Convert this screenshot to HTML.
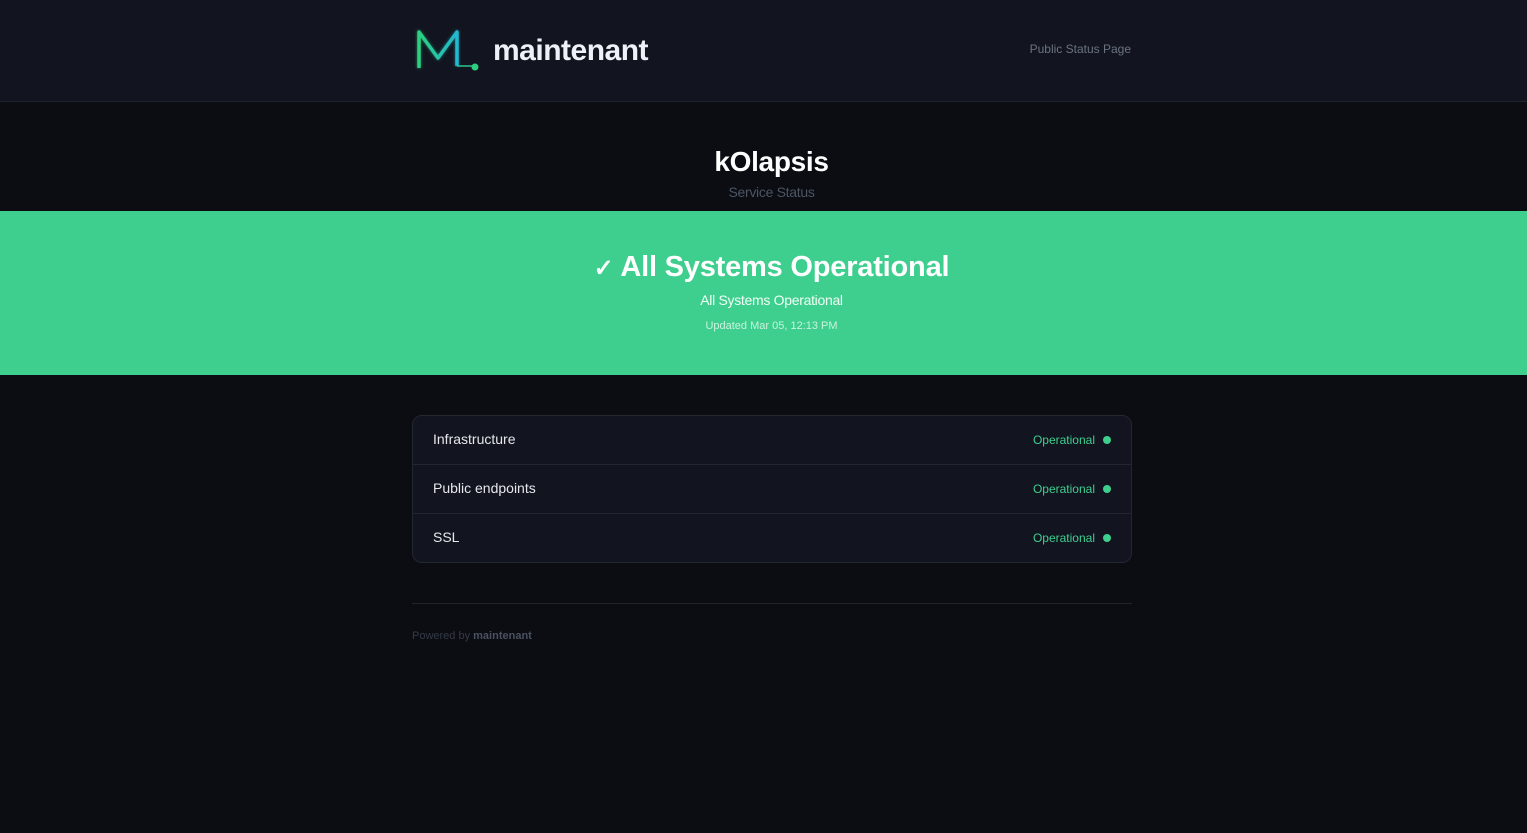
<!DOCTYPE html>
<html><head><meta charset="utf-8"><style>
*{margin:0;padding:0;box-sizing:border-box}
body{width:1527px;height:833px;background:#0b0d12;font-family:"Liberation Sans",sans-serif;position:relative;overflow:hidden}
.hdr{position:absolute;left:0;top:0;width:1527px;height:102px;background:#121520;border-bottom:1px solid #1f232c}
.brand{position:absolute;left:493px;top:34px;color:#eef2f8;font-size:30px;font-weight:bold;letter-spacing:-0.5px}
.pub{position:absolute;right:396px;top:42px;color:#6b7280;font-size:12px}
.c{left:8px;width:1527px;text-align:center}
.title{position:absolute;top:146px;color:#fff;font-size:28px;font-weight:bold;letter-spacing:-0.3px}
.sub{position:absolute;top:184px;color:#4b5563;font-size:14px;letter-spacing:-0.3px}
.band{position:absolute;top:211px;left:0;width:1527px;height:164px;background:#3ecf8e}
.big{position:absolute;top:40px;color:#fff;font-size:29px;font-weight:bold;letter-spacing:-0.2px}
.b2{position:absolute;top:81px;color:#f0fff6;font-size:14px;letter-spacing:-0.3px}
.b3{position:absolute;top:109px;color:#c9f2de;font-size:11px}
.card{position:absolute;left:412px;top:415px;width:720px;height:148px;border:1px solid #232730;border-radius:10px;background:#121520;overflow:hidden}
.row{height:49px;border-bottom:1px solid #232730;position:relative}
.row:last-child{border-bottom:none}
.row .n{position:absolute;left:20px;top:15px;color:#e5e7eb;font-size:14px}
.row .s{position:absolute;right:36px;top:17px;color:#3ecf8e;font-size:12px}
.row .d{position:absolute;right:20px;top:20px;width:8px;height:8px;border-radius:50%;background:#3ecf8e}
.hr{position:absolute;left:412px;top:603px;width:720px;height:1px;background:#1f232c}
.foot{position:absolute;left:412px;top:630px;color:#343a46;font-size:11px}
.foot b{color:#4a5160}
</style></head><body>
<div class="hdr">
<svg style="position:absolute;left:414px;top:28px" width="70" height="46" viewBox="0 0 70 46">
<defs><linearGradient id="g" x1="0" x2="1"><stop offset="0" stop-color="#2ccf7e"/><stop offset="1" stop-color="#22b8d0"/></linearGradient>
<filter id="f"><feGaussianBlur stdDeviation="1.5"/></filter></defs>
<g fill="none" stroke="url(#g)" stroke-width="3.5" stroke-linejoin="round">
<path d="M5 40 V4 L24 30 L43 4 V38" filter="url(#f)" opacity=".6"/>
<path d="M5 40 V4 L24 30 L43 4 V38"/>
</g>
<path d="M43 38 H58" stroke="#2bc48e" stroke-width="1.5"/>
<circle cx="61" cy="39" r="3.5" fill="#2ccf7e"/>
</svg>
<div class="brand">maintenant</div>
<div class="pub">Public Status Page</div>
</div>
<div class="title c">kOlapsis</div>
<div class="sub c">Service Status</div>
<div class="band">
<div class="big c"><span style="font-size:24px">✓</span> All Systems Operational</div>
<div class="b2 c">All Systems Operational</div>
<div class="b3 c">Updated Mar 05, 12:13 PM</div>
</div>
<div class="card">
<div class="row"><span class="n">Infrastructure</span><span class="s">Operational</span><span class="d"></span></div>
<div class="row"><span class="n">Public endpoints</span><span class="s">Operational</span><span class="d"></span></div>
<div class="row"><span class="n">SSL</span><span class="s">Operational</span><span class="d"></span></div>
</div>
<div class="hr"></div>
<div class="foot">Powered by <b>maintenant</b></div>
</body></html>
